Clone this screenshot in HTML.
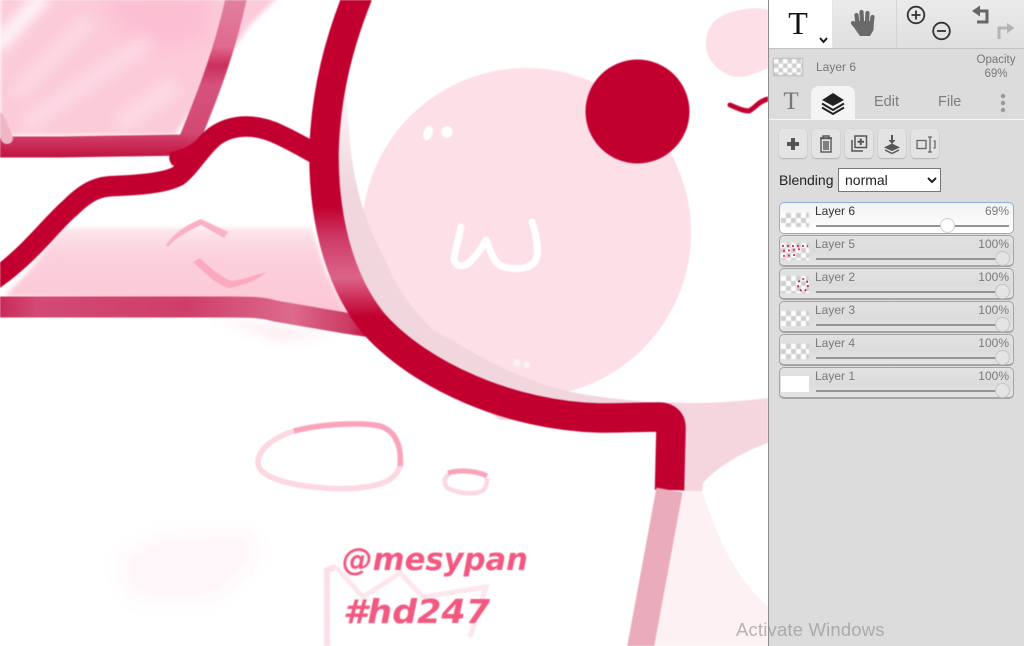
<!DOCTYPE html>
<html><head><meta charset="utf-8"><style>
html,body{margin:0;padding:0;width:1024px;height:646px;overflow:hidden;background:#fff;font-family:"Liberation Sans",Arial,sans-serif}
#art{position:absolute;left:0;top:0;filter:blur(.45px)}
#panel{position:absolute;left:768px;top:0;width:256px;height:646px;background:#dcdcdc;border-left:1px solid #8c8c8c;box-sizing:border-box}
.abs{position:absolute}
.top{position:absolute;left:0;top:0;width:255px;height:48px;background:linear-gradient(#ebebeb,#dfdfdf);border-bottom:1px solid #c2c2c2}
.btn{position:absolute;top:129px;width:28px;height:29px;background:#e3e3e3;border-radius:4px;box-shadow:0 1px 1px #b4b4b4,0 0 1px #c4c4c4}
.row{position:absolute;left:10px;width:235px;height:32px;box-sizing:border-box;border:1px solid #a5a5a5;border-bottom-width:2px;border-radius:5px;background:linear-gradient(#e2e2e2,#dcdcdc 55%,#e4e4e4);color:#7a7a7a;font-size:12px}
.row.on{background:linear-gradient(#f2f2f2,#fff);border:1px solid #8fb0dc;color:#333}
.row .n{position:absolute;left:35px;top:1px}
.row .o{position:absolute;right:4px;top:1px;color:#7a7a7a}
.row .l{position:absolute;left:36px;right:4px;top:22px;height:2px;background:#949494}
.row .k{position:absolute;left:215px;top:15px;width:15px;height:15px;border-radius:50%;background:#e4e4e4;border:1px solid #c4c4c4;box-sizing:border-box}
.row.on .k{left:160px;background:#fff;border-color:#d0d0d0}
.th{position:absolute;left:1px;width:28px;background-color:#fff;background-image:conic-gradient(#cecece 25%,#fff 0 50%,#cecece 0 75%,#fff 0);background-size:10px 10px;filter:blur(.4px)}
.tab{position:absolute;top:94px;font-size:14.5px;color:#7c7c7c}
</style></head><body>
<svg id="art" width="768" height="646" viewBox="0 0 768 646" xmlns="http://www.w3.org/2000/svg">
<defs>
<filter id="b6" filterUnits="userSpaceOnUse" x="-60" y="-60" width="900" height="760"><feGaussianBlur stdDeviation="6"/></filter>
<filter id="b3" filterUnits="userSpaceOnUse" x="-60" y="-60" width="900" height="760"><feGaussianBlur stdDeviation="2.500"/></filter>
<filter id="b10" filterUnits="userSpaceOnUse" x="-60" y="-60" width="900" height="760"><feGaussianBlur stdDeviation="10"/></filter>
<linearGradient id="gUp" gradientUnits="userSpaceOnUse" x1="0" y1="0" x2="0" y2="155"><stop offset="0" stop-color="#e27f9f"/><stop offset=".3" stop-color="#e06a90"/><stop offset=".42" stop-color="#cc2f5c"/><stop offset=".55" stop-color="#d6527c"/><stop offset=".85" stop-color="#d24a74"/><stop offset="1" stop-color="#c41a48"/></linearGradient>
<linearGradient id="gH" gradientUnits="userSpaceOnUse" x1="0" y1="136" x2="0" y2="158"><stop offset="0" stop-color="#cf3d68"/><stop offset="1" stop-color="#c1123f"/></linearGradient>
<linearGradient id="gB" gradientUnits="userSpaceOnUse" x1="0" y1="0" x2="375" y2="0"><stop offset="0" stop-color="#c92a58"/><stop offset=".1" stop-color="#d24a74"/><stop offset=".5" stop-color="#cf3e68"/><stop offset=".78" stop-color="#dc6a8c"/><stop offset=".93" stop-color="#cc3a62"/><stop offset="1" stop-color="#c10030"/></linearGradient>
<linearGradient id="gM" gradientUnits="userSpaceOnUse" x1="0" y1="0" x2="0" y2="646"><stop offset="0" stop-color="#c10030"/><stop offset=".32" stop-color="#c10030"/><stop offset=".37" stop-color="#cf3c68"/><stop offset=".43" stop-color="#dc6488"/><stop offset=".49" stop-color="#c10030"/><stop offset="1" stop-color="#c10030"/></linearGradient>
<linearGradient id="gL" x1="0" y1="0" x2="0" y2="1"><stop offset="0" stop-color="#fde6ec"/><stop offset=".3" stop-color="#fcd0dc"/><stop offset="1" stop-color="#fcc6d5"/></linearGradient>
<linearGradient id="gBand" gradientUnits="userSpaceOnUse" x1="0" y1="60" x2="0" y2="190"><stop offset="0" stop-color="#fff"/><stop offset="1" stop-color="#f1d6de"/></linearGradient>
</defs>
<rect width="768" height="646" fill="#fff"/>
<!-- upper pink fill -->
<path d="M0,-10 L285,-10 L250,25 L215,75 L175,135 L0,135Z" fill="#fccbda" filter="url(#b3)"/>
<path d="M100,-10 L215,-10 L205,40 L160,50 L120,30Z" fill="#fbb7cd" opacity=".6" filter="url(#b10)"/>
<path d="M-5,48 L45,-5" fill="none" stroke="#fff" stroke-width="16" opacity=".8" filter="url(#b6)"/>
<path d="M15,95 L90,20" fill="none" stroke="#fff" stroke-width="12" opacity=".3" filter="url(#b6)"/>
<path d="M25,125 L150,40" fill="none" stroke="#fff" stroke-width="16" opacity=".28" filter="url(#b6)"/>
<path d="M120,125 L175,85" fill="none" stroke="#fff" stroke-width="18" opacity=".3" filter="url(#b6)"/>
<!-- lower pink fill -->
<path d="M62,228 L312,228 L325,270 L350,318 L250,302 L5,296 L30,270Z" fill="url(#gL)" filter="url(#b3)"/>
<path d="M210,318 L335,335 L280,340 Z" fill="#fde9ee" filter="url(#b6)"/>
<!-- squiggles -->
<path d="M166,245 C175,232 188,224 201,219 L228,232 L224,238 L201,225 C190,230 175,238 168,247Z" fill="#fbb0c4"/>
<path d="M193,262 L200,258 C210,268 222,278 232,281 C245,279 255,275 266,272 C260,279 245,285 230,288 C215,285 205,272 193,262Z" fill="#fba9bf"/>
<!-- right limbs -->
<path d="M660,402 L690,403 C715,403 745,401 768,398 L768,443 C735,455 715,470 703,483 L702,491 L680,491Z" fill="#f5d6df"/>
<path d="M682,491 L702,491 C715,530 735,580 768,606 L768,646 L650,646Z" fill="#fdf1f4"/>
<!-- big circle -->
<circle cx="526.500" cy="232.500" r="164.500" fill="#fddfe7"/>
<!-- shadow band -->
<path d="M345,65 L326,150 L338,260 L380,330 L500,420 L665,420 L665,403 C620,400 570,395 540,383 C500,370 470,350 433,330 C410,307 395,285 390,270 C378,245 370,230 367,220 C358,195 352,170 349,130 C347,105 346,85 345,65Z" fill="url(#gBand)"/>
<!-- ear blob -->
<path d="M768,10 C755,6 735,9 720,17 C708,24 705,38 706,48 C708,62 722,76 738,77 C750,77 760,71 768,68Z" fill="#fddfe7"/>
<path d="M730,105 C737,108 743,111 749,111 C755,108 759,101 768,99" fill="none" stroke="#c10030" stroke-width="5" stroke-linecap="round"/>
<!-- nose -->
<circle cx="637.500" cy="111.500" r="52" fill="#c10030"/>
<!-- face -->
<path d="M461,227 C459,238 455,250 454,259 C455,268 464,267 470,262 C477,255 483,246 486,240 C489,247 492,257 497,263 C505,270 525,271 534,263 C540,256 537,235 532,222" fill="none" stroke="#fff" stroke-width="7" stroke-linecap="round" stroke-linejoin="round"/>
<ellipse cx="428" cy="133" rx="4.500" ry="7.500" fill="#fff" transform="rotate(18 428 133)"/>
<circle cx="447" cy="132" r="5.800" fill="#fff"/>
<circle cx="517" cy="363" r="3.800" fill="#fdf3f5"/><circle cx="527" cy="365" r="3.300" fill="#fdf3f5"/>
<!-- strokes -->
<path d="M237,-5 C225,50 210,90 186,148" fill="none" stroke="url(#gUp)" stroke-width="21"/>
<path d="M-5,147 L60,147 L188,145" fill="none" stroke="url(#gH)" stroke-width="21"/>
<path d="M-2,118 L7,138" fill="none" stroke="#efb6c5" stroke-width="12" stroke-linecap="round"/>
<path d="M171,152 Q167,158 172,165 L192,172 L207,146 L197,140 L185,148Z" fill="#c10030"/>
<path d="M-8,281 C30,255 50,225 70,208 C88,190 100,186 115,186 C140,185 165,183 178,176 C192,165 200,148 215,136 C235,122 260,125 280,135 C295,142 305,148 318,155" fill="none" stroke="#c10030" stroke-width="20.500"/>
<path d="M-5,307 L225,307 C250,307 262,307 275,311 L345,323 L378,328" fill="none" stroke="url(#gB)" stroke-width="21"/>
<path d="M358,-5 C340,40 326,90 324,150 C323,230 345,290 375,325 C420,375 510,416 600,418 C625,418 645,417 658,417 Q671,417 671,428 L669.500,490" fill="none" stroke="url(#gM)" stroke-width="29.500"/>
<path d="M669.500,490 L640,650" fill="none" stroke="#eaabba" stroke-width="26.500"/>
<!-- ovals -->
<path d="M298,430 C272,437 258,450 258,463 C258,476 285,485 325,488 C355,490 385,487 395,475 C399,470 401,466 401,460" fill="none" stroke="#fcd8e1" stroke-width="5.500"/>
<path d="M294,431 C320,424 360,422 380,426 C395,431 402,445 400,466" fill="none" stroke="#fba3ba" stroke-width="5.500"/>
<path d="M449,474 C442,480 444,488 452,490 C465,495 482,494 485,488 C487,484 487,481 487,478" fill="none" stroke="#fcd8e1" stroke-width="4.500"/>
<path d="M448,473 C458,470 475,470 487,476" fill="none" stroke="#f9a3b9" stroke-width="5"/>
<!-- faint smudges -->
<path d="M115,560 L160,535 L250,530 L260,560 L215,600 L130,600Z" fill="#fef6f8" filter="url(#b10)"/>
<!-- back shape behind text -->
<path d="M327,646 L327,570 L336,567" fill="none" stroke="#fcdfe7" stroke-width="6"/>
<path d="M336,567 L363,597 L400,573 L423,597 L486,587 L470,637" fill="none" stroke="#fde7ed" stroke-width="5"/>
<!-- text -->
<text x="342" y="570" font-family="'DejaVu Sans',sans-serif" font-size="31" font-weight="bold" font-style="oblique" fill="#f25880" textLength="186" lengthAdjust="spacingAndGlyphs">@mesypan</text>
<text x="343" y="623" font-family="'DejaVu Sans',sans-serif" font-size="33" font-weight="bold" font-style="oblique" fill="#f25880" textLength="147" lengthAdjust="spacingAndGlyphs">#hd247</text>
</svg>

<div id="panel">
<div class="top"></div>
<div class="abs" style="left:0;top:0;width:63px;height:48px;background:#fff"></div>
<div class="abs" style="left:127px;top:0;width:1px;height:48px;background:#d4d4d4"></div>
<div class="abs" style="left:63px;top:0;width:1px;height:48px;background:#e4e4e4"></div>
<div class="abs" style="left:15px;top:5px;width:28px;text-align:center;font:32px 'Liberation Serif',serif;color:#111">T</div>
<svg class="abs" style="left:0;top:0" width="255" height="48" viewBox="769 0 255 48">
<path d="M820,38 L823.500,42 L827,38" fill="none" stroke="#111" stroke-width="1.800"/>
<g fill="none" stroke="#6a6a6a" stroke-linecap="round">
<path d="M857.500,24 L856.500,15 M862,22 L861.500,12 M867,22 L867.500,13 M871.500,24 L872.500,17" stroke-width="4.200"/>
<path d="M853,23 L858,29" stroke-width="4.200"/>
</g>
<path d="M855,21 L874,21 L873.500,30 L870,36 L860,36 L855,29Z" fill="#6a6a6a"/>
<g fill="none" stroke="#333" stroke-width="1.800">
<circle cx="916" cy="15" r="8.300"/><path d="M911.500,15 H920.500 M916,10.500 V19.500"/>
<circle cx="941.500" cy="31" r="8.300"/><path d="M937,31 H946"/>
</g>
<path d="M979,11 H987 V22 H977" fill="none" stroke="#666" stroke-width="3"/>
<path d="M980,5.500 L972,11 L980,16.500Z" fill="#666"/>
<path d="M999,39 V28 H1008" fill="none" stroke="#b4b4b4" stroke-width="3"/>
<path d="M1007,23 L1014.500,28 L1007,33.500Z" fill="#b4b4b4"/>
</svg>

<div class="th" style="left:4px;top:58px;width:30px;height:18px;border:1px solid #b5b5b5;box-sizing:border-box;background-size:9px 9px"></div>
<div class="abs" style="left:47px;top:60px;font-size:12px;color:#777">Layer 6</div>
<div class="abs" style="left:197px;top:54px;width:60px;text-align:center;font-size:11.500px;line-height:13.500px;color:#777">Opacity<br>69%</div>

<!-- tabs -->
<div class="abs" style="left:0;top:119px;width:255px;height:1px;background:#f6f6f6"></div>
<div class="abs" style="left:42px;top:86px;width:44px;height:33px;background:#f4f4f4;border-radius:8px 8px 0 0"></div>
<div class="abs" style="left:11px;top:88px;width:22px;text-align:center;font:25px 'Liberation Serif',serif;color:#777">T</div>
<svg class="abs" style="left:42px;top:86px" width="44" height="33" viewBox="811 86 44 33">
<path d="M833,93 L844,100 L833,106 L822,100Z" fill="#222"/>
<path d="M822,103.500 L833,110 L844,103.500" fill="none" stroke="#222" stroke-width="2"/>
<path d="M822,107.500 L833,114 L844,107.500" fill="none" stroke="#222" stroke-width="2"/>
</svg>
<div class="tab" style="left:105px">Edit</div>
<div class="tab" style="left:169px">File</div>
<svg class="abs" style="left:226px;top:90px" width="16" height="26"><circle cx="8" cy="6" r="2.200" fill="#999"/><circle cx="8" cy="13" r="2.200" fill="#999"/><circle cx="8" cy="20" r="2.200" fill="#999"/></svg>

<!-- buttons -->
<div class="btn" style="left:10px"></div><div class="btn" style="left:43px"></div><div class="btn" style="left:76px"></div><div class="btn" style="left:109px"></div><div class="btn" style="left:142px"></div>
<svg class="abs" style="left:0;top:125px" width="255" height="38" viewBox="769 125 255 38">
<path d="M793,138 V150 M787,144 H799" stroke="#555" stroke-width="4" fill="none"/>
<g fill="none" stroke="#555" stroke-width="1.400"><path d="M820,138 H832 M823,138 V136 H829 V138"/><rect x="821" y="138.500" width="10" height="13.500"/><path d="M824,141 V150 M826,141 V150 M828,141 V150"/></g>
<g fill="none" stroke="#555" stroke-width="1.500"><rect x="855" y="136" width="11.500" height="11.500"/><path d="M852,140 V151 H863"/><path d="M860.700,138.500 V145 M857.500,141.700 H864" stroke-width="2"/></g>
<path d="M892,135 V141" stroke="#555" stroke-width="2"/><path d="M888.500,140 H895.500 L892,144Z" fill="#555"/>
<path d="M892,143.500 L900,147.500 L892,151 L884,147.500Z" fill="#555"/><path d="M885,150 L892,153.500 L899,150" fill="none" stroke="#555" stroke-width="1.400"/>
<g fill="none" stroke="#666" stroke-width="1.300"><rect x="917" y="140.500" width="9" height="8"/><path d="M928,137 H932 M930,137 V152 M928,152 H932"/><path d="M933.500,141 H935 V148 H933.500"/></g>
</svg>

<div class="abs" style="left:10px;top:172px;font-size:14px;color:#222">Blending</div>
<select class="abs" style="left:69px;top:168px;width:103px;height:24px;font:14px 'Liberation Sans',sans-serif;background:#fff;border:1px solid #767676;padding-left:2px;box-sizing:border-box;color:#222;border-radius:0"><option>normal</option></select>

<!-- layers -->
<div class="row on" style="top:202px"><div class="th" style="top:10px;height:14px"></div><div class="n">Layer 6</div><div class="o">69%</div><div class="l"></div><div class="k"></div></div>
<div class="row" style="top:235px"><div class="th" style="top:7px;height:17px"></div>
<svg class="abs" style="left:1px;top:7px" width="28" height="17"><path d="M1,3 L27,3 M2,8 L20,6 M2,13 L14,12" stroke="#d8406a" stroke-width="2" stroke-dasharray="2 3" fill="none"/></svg>
<div class="n">Layer 5</div><div class="o">100%</div><div class="l"></div><div class="k"></div></div>
<div class="row" style="top:268px"><div class="th" style="top:7px;height:17px"></div>
<svg class="abs" style="left:1px;top:7px" width="28" height="17"><ellipse cx="22" cy="9" rx="5" ry="6" stroke="#b01040" stroke-width="1.500" stroke-dasharray="2 3" fill="none"/></svg>
<div class="n">Layer 2</div><div class="o">100%</div><div class="l"></div><div class="k"></div></div>
<div class="row" style="top:301px"><div class="th" style="top:9px;height:15px"></div><div class="n">Layer 3</div><div class="o">100%</div><div class="l"></div><div class="k"></div></div>
<div class="row" style="top:334px"><div class="th" style="top:9px;height:15px"></div><div class="n">Layer 4</div><div class="o">100%</div><div class="l"></div><div class="k"></div></div>
<div class="row" style="top:367px"><div class="abs" style="left:1px;top:8px;width:28px;height:16px;background:#fff"></div><div class="n">Layer 1</div><div class="o">100%</div><div class="l"></div><div class="k"></div></div>
</div>

<div class="abs" style="left:736px;top:619px;font-size:18.500px;color:rgba(140,140,140,.62);white-space:nowrap;letter-spacing:.17px">Activate Windows</div>
</body></html>
